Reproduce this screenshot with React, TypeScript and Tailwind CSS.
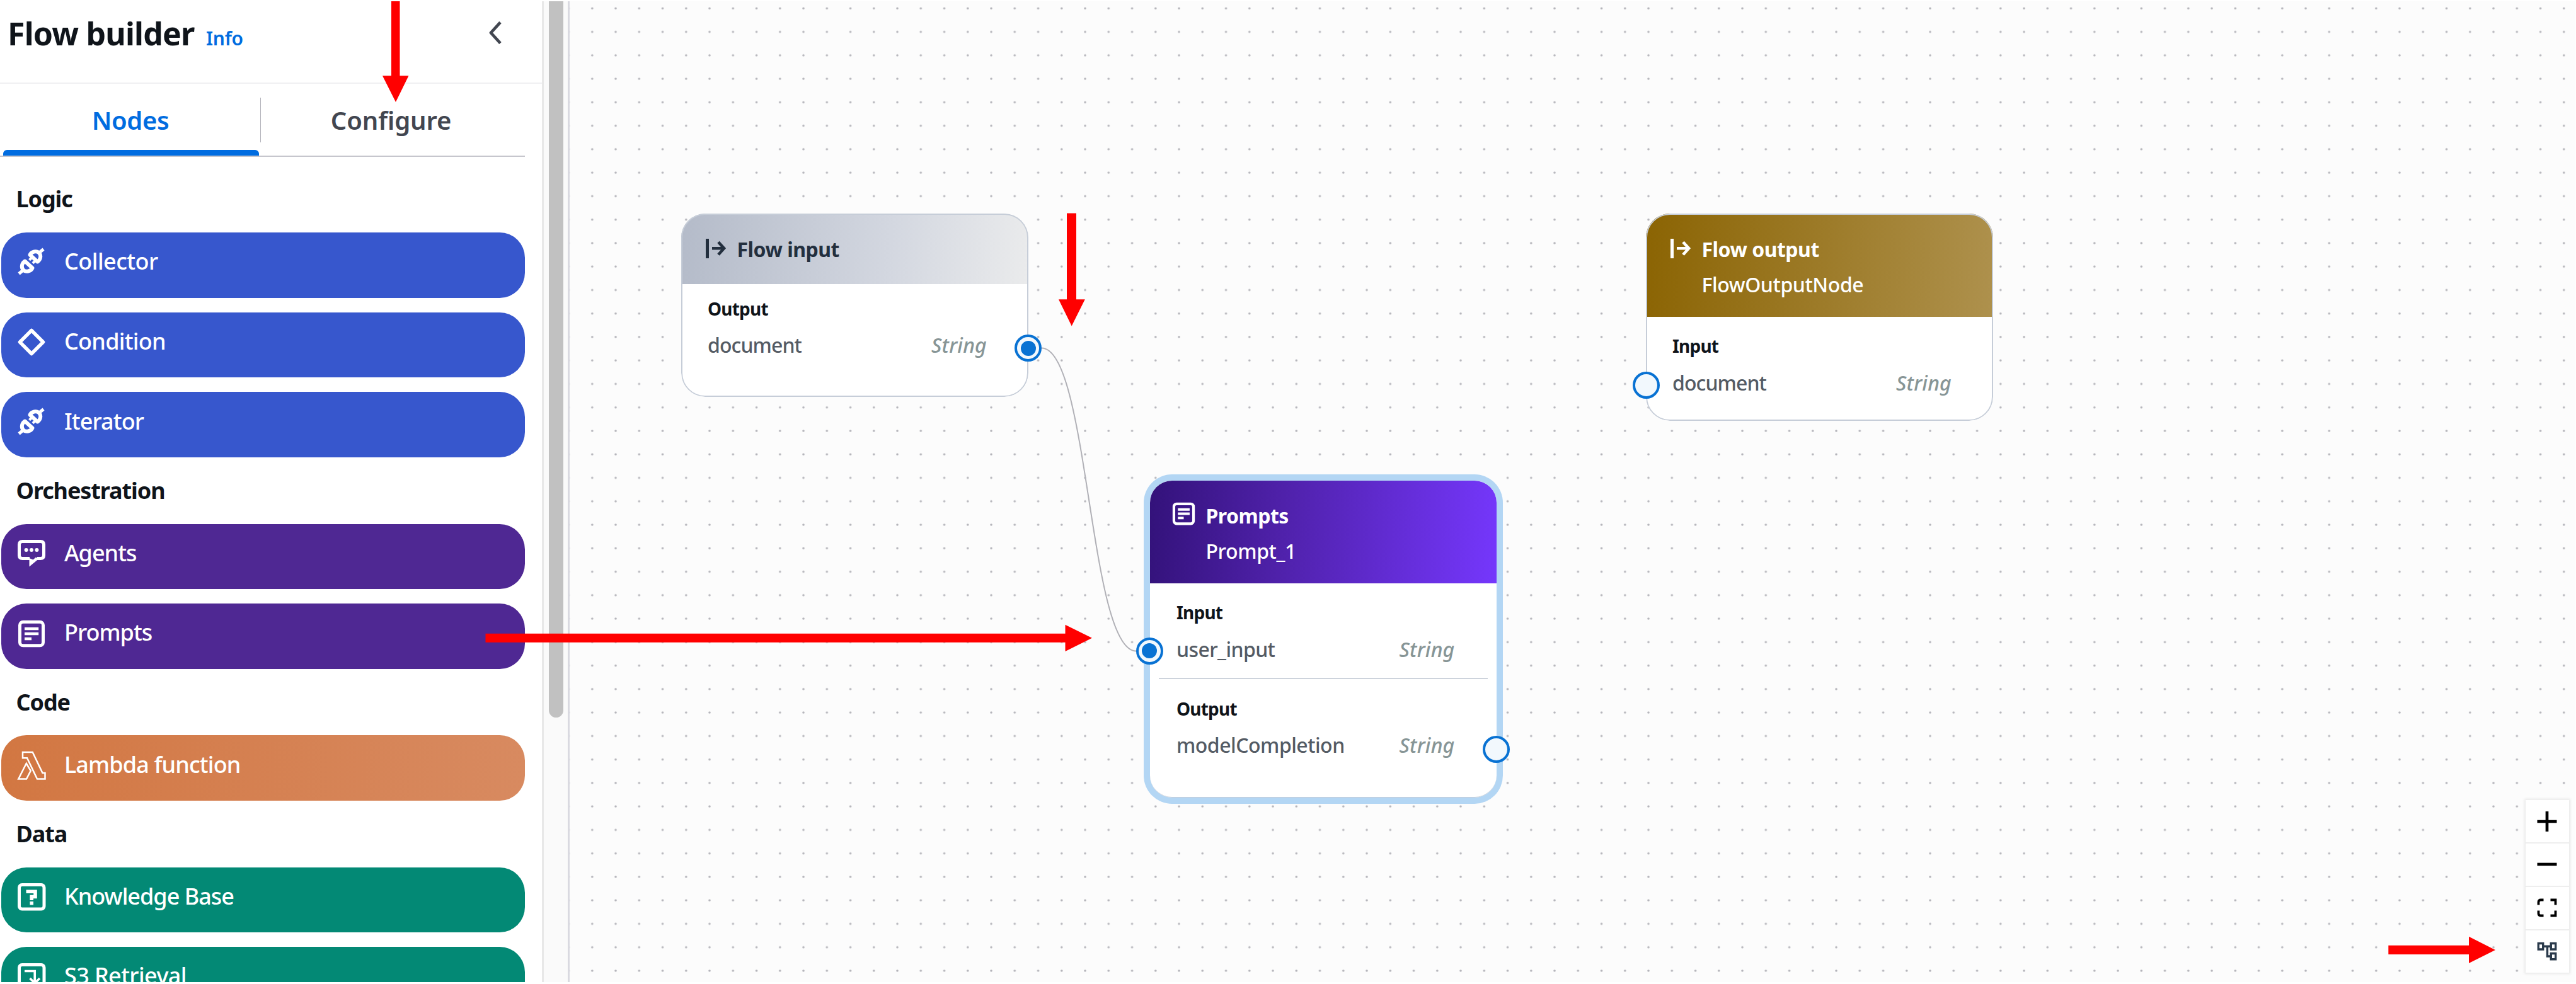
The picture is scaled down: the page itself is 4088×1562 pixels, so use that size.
import type { ReactNode } from "react";

/* ---------- Icons ---------- */

function Icon({ children, className = "size-[44px]" }: { children: ReactNode; className?: string }) {
  return (
    <svg viewBox="0 0 44 44" className={`${className} shrink-0 overflow-visible`} fill="none" stroke="currentColor" strokeWidth="5">
      {children}
    </svg>
  );
}

function PlugIcon() {
  const half = (
    <>
      <path d="M11.5 20.5 23.5 31.5C21 37 13 38.5 9 34.5 4.800 30 7 23.500 11.500 20.500Z" strokeWidth="6" strokeLinejoin="round" />
      <path d="M8 35.500 2 40.500" strokeWidth="5" />
    </>
  );
  return (
    <Icon>
      {half}
      <g transform="rotate(180 21.5 21)">{half}</g>
      <path d="M23 14.500 18.500 18.800M28.500 19.500 24 23.800" strokeWidth="4" />
    </Icon>
  );
}

function DiamondIcon() {
  return (
    <Icon>
      <path d="M22 3.500 40.500 22 22 40.500 3.500 22Z" strokeLinejoin="round" strokeWidth="5.500" />
    </Icon>
  );
}

function ChatIcon() {
  return (
    <Icon>
      <path d="M19 29.500H7.500Q2.500 29.500 2.500 24.500V7.500Q2.500 2.500 7.500 2.500H36.500Q41.500 2.500 41.500 7.500V24.500Q41.500 29.500 36.500 29.500H31" />
      <path d="M18.500 29V42.500L33 30.500 29 27.500 24.500 31.500Z" fill="currentColor" stroke="none" />
      <g fill="currentColor" stroke="none">
        <circle cx="13.600" cy="16" r="3" />
        <circle cx="22" cy="16" r="3" />
        <circle cx="30.400" cy="16" r="3" />
      </g>
    </Icon>
  );
}

function DocumentIcon({ className }: { className?: string }) {
  return (
    <Icon className={className}>
      <rect x="3.500" y="3.300" width="37" height="37.500" rx="5" />
      <path d="M11 14H33.200M11 22H33.200M11 30H22" strokeWidth="4.600" />
    </Icon>
  );
}

function LambdaIcon() {
  return (
    <Icon>
      <path
        d="M8 1H23.700L39.500 34H43.500V43.500H31L15 10.300H8ZM13.800 18.800 20.700 30.500 14 43.500H1.300Z"
        strokeWidth="2.500"
      />
    </Icon>
  );
}

function QuestionIcon() {
  return (
    <Icon>
      <rect x="2.500" y="2.500" width="39.500" height="38.500" rx="4.500" />
      <path d="M13.500 13.200H28V21.500H22.200V27" strokeWidth="5.600" />
      <path d="M22.200 29V34.500" strokeWidth="5.600" />
    </Icon>
  );
}

function RetrieveIcon() {
  return (
    <Icon>
      <rect x="2.500" y="2.500" width="39.500" height="38.500" rx="4.500" />
      <path d="M11 12.500H27.200V32M19.500 24 27.200 31.500 35 24" strokeWidth="3.600" />
    </Icon>
  );
}

function FlowIcon() {
  return (
    <svg viewBox="0 0 32 32" className="h-[32px] w-[32px] shrink-0" fill="none" stroke="currentColor" strokeWidth="5">
      <path d="M2.500 1V32" strokeWidth="5" />
      <path d="M10 16.200H29" strokeWidth="4.600" />
      <path d="M20 6.200 29 16.200 20 26.200" strokeWidth="4.600" />
    </svg>
  );
}

/* ---------- Sidebar ---------- */

type Item = { label: string; icon: ReactNode; text?: string };
type Section = { title: string; color: string; items: Item[] };

const sections: Section[] = [
  {
    title: "Logic",
    color: "bg-[#3757cd]",
    items: [
      { label: "Collector", icon: <PlugIcon />, text: "tracking-[-0.55px]" },
      { label: "Condition", icon: <DiamondIcon />, text: "tracking-[-0.75px]" },
      { label: "Iterator", icon: <PlugIcon />, text: "tracking-[-0.9px]" },
    ],
  },
  {
    title: "Orchestration",
    color: "bg-[#4f2893]",
    items: [
      { label: "Agents", icon: <ChatIcon />, text: "tracking-[-1px]" },
      { label: "Prompts", icon: <DocumentIcon />, text: "tracking-[-1px]" },
    ],
  },
  {
    title: "Code",
    color: "bg-linear-to-r from-[#d27742] to-[#d88a60]",
    items: [{ label: "Lambda function", icon: <LambdaIcon />, text: "tracking-[-0.85px]" }],
  },
  {
    title: "Data",
    color: "bg-[#038975]",
    items: [
      { label: "Knowledge Base", icon: <QuestionIcon />, text: "tracking-[-1px]" },
      { label: "S3 Retrieval", icon: <RetrieveIcon />, text: "tracking-[-0.6px]" },
    ],
  },
];

function Sidebar() {
  return (
    <aside className="flex h-full w-[860px] shrink-0 flex-col overflow-hidden bg-white">
      <header className="flex h-[131px] shrink-0 items-start justify-between border-b-2 border-[#f0f0f2] pt-[20.500px] pl-[12px]">
        <div className="flex items-baseline gap-[18.500px]">
          <h1 className="text-[50px] leading-[60px] font-bold tracking-[-0.8px] text-[#0f141a]">Flow builder</h1>
          <a className="text-[30px] leading-[60px] font-semibold tracking-[-0.3px] text-[#006ce0]">Info</a>
        </div>
        <svg viewBox="0 0 20 36" className="mt-[11px] mr-[64.500px] h-[36px] w-[20px]" fill="none" stroke="#424650" strokeWidth="4.800">
          <path d="M18 1.500 3 18 18 34.500" strokeLinejoin="round" />
        </svg>
      </header>

      <nav className="flex h-[116px] w-[833px] shrink-0 border-b-2 border-[#c6c6cd] text-[40px] leading-[54px] font-semibold">
        <div className="relative flex w-[414px] justify-center pt-[30.500px] tracking-[-0.4px] text-[#006ce0]">
          Nodes
          <span className="absolute bottom-0 left-[4.500px] h-[9.500px] w-[406.500px] rounded-t-[6px] bg-[#006ce0]" />
          <span className="absolute top-[22px] right-0 h-[71px] w-[1.500px] bg-[#b4b4bb]" />
        </div>
        <div className="flex w-[413px] justify-center pt-[30.500px] tracking-[-0.1px] text-[#424650]">Configure</div>
      </nav>

      <div className="flex flex-col pt-[14.500px] pr-[27px] pl-[1.500px]">
        {sections.map((s) => (
          <section key={s.title} className="flex shrink-0 flex-col">
            <h2 className="pt-[28.700px] pb-[28.800px] pl-[24px] text-[36px] leading-[48px] font-bold tracking-[-1.1px] text-[#0f141a]">
              {s.title}
            </h2>
            <div className="flex flex-col gap-[23px]">
              {s.items.map((it) => (
                <div key={it.label} className={`flex h-[103.700px] items-start gap-[30.500px] rounded-[40px] pl-[26px] text-white ${s.color}`}>
                  <div className="pt-[25.500px]">{it.icon}</div>
                  <span className={`pt-[22.200px] text-[36px] leading-[48px] font-medium ${it.text}`}>{it.label}</span>
                </div>
              ))}
            </div>
          </section>
        ))}
      </div>
    </aside>
  );
}

function Scrollbar() {
  return (
    <div className="flex h-full w-[44px] shrink-0 border-r-[3px] border-l-[3px] border-r-[#d9d9e0] border-l-[#e8e8e8] bg-[#fafafa] pl-[8px]">
      <div className="h-[1137px] w-[23px] rounded-b-full bg-[#c1c1c1]" />
    </div>
  );
}

/* ---------- Canvas ---------- */

function Handle({ filled, className }: { filled?: boolean; className: string }) {
  return (
    <span className={`absolute flex size-[43px] items-center justify-center rounded-full border-4 border-[#0972d3] bg-[#f2f8fd] ${className}`}>
      {filled && <span className="size-[24px] rounded-full bg-[#0972d3]" />}
    </span>
  );
}

function Port({ label, name, tight, spacing }: { label: string; name: string; tight?: boolean; spacing: string }) {
  return (
    <div className={`${tight ? "pt-[19px]" : "pt-[26.400px]"} pr-[66px] pl-[42.500px]`}>
      <div className="text-[28px] leading-[40px] font-bold tracking-[-0.8px] text-[#0f141a]">{label}</div>
      <div className="mt-[10.800px] -mb-px flex justify-between text-[32px] leading-[56px] font-medium">
        <span className={`text-[#545b64] ${spacing}`}>{name}</span>
        <span className="tracking-[0.2px] text-[#879596] italic">String</span>
      </div>
    </div>
  );
}

function NodeHeader({ icon, title, subtitle, className }: { icon: ReactNode; title: string; subtitle?: string; className: string }) {
  return (
    <div className={`flex flex-col pt-[28.800px] text-[32px] leading-[56px] ${className}`}>
      <div className="flex">
        <div className="flex w-[89px] shrink-0 pt-[10.500px] pl-[39px]">{icon}</div>
        <span className="font-bold tracking-[-0.5px]">{title}</span>
      </div>
      {subtitle && <div className="pl-[89px] font-medium tracking-[-0.4px]">{subtitle}</div>}
    </div>
  );
}

function Canvas() {
  return (
    <main className="relative h-full flex-1 overflow-hidden bg-[#fcfcfc]">
      <svg className="absolute inset-0 h-full w-full" fill="none">
        <pattern id="dots" x="17.200" y="-7.330" width="37.250" height="37.260" patternUnits="userSpaceOnUse">
          <circle cx="18.600" cy="18.630" r="1.800" fill="#b4b4ba" />
        </pattern>
        <rect width="100%" height="100%" fill="url(#dots)" />
        <path d="M749 550.500C824 550.500 824 1031.500 899 1031.500" stroke="#b1b1b7" strokeWidth="2" />
      </svg>

      <div className="absolute top-[337px] left-[176.500px] h-[291px] w-[551.500px]">
        <div className="relative h-full overflow-hidden rounded-[38px] bg-white">
          <NodeHeader
            icon={<FlowIcon />}
            title="Flow input"
            className="h-[111.500px] bg-[linear-gradient(94deg,#b4bbc9_0%,#d3d7e0_60%,#eaebec_100%)] text-[#232f3e]"
          />
          <Port label="Output" name="document" tight spacing="tracking-[-0.9px]" />
          <span className="absolute inset-0 rounded-[38px] border-2 border-[#c6cdd8]" />
        </div>
        <Handle filled className="top-[192px] -right-[21px]" />
      </div>

      <div className="absolute top-[337px] left-[1707.500px] h-[329px] w-[551.500px]">
        <div className="relative h-full overflow-hidden rounded-[38px] bg-white">
          <NodeHeader
            icon={<FlowIcon />}
            title="Flow output"
            subtitle="FlowOutputNode"
            className="h-[164px] bg-[linear-gradient(94deg,#8b6403,#ae914d)] text-white"
          />
          <Port label="Input" name="document" spacing="tracking-[-0.9px]" />
          <span className="absolute inset-0 rounded-[38px] border-2 border-[#c6cdd8]" />
        </div>
        <Handle className="top-[250.500px] -left-[21px]" />
      </div>

      <div className="absolute top-[760.500px] left-[920.500px] h-[503px] w-[550px] rounded-[35px] shadow-[0_0_0_10px_#b3d6f4]">
        <div className="relative h-full overflow-hidden rounded-[35px] border-b-[1.500px] border-[#c6cdd8] bg-white">
          <NodeHeader
            icon={<DocumentIcon className="-mt-[4.500px] -ml-[4px] size-[37px]" />}
            title="Prompts"
            subtitle="Prompt_1"
            className="h-[163px] bg-[linear-gradient(94deg,#33127a,#4f21aa_38%,#7537fc)] text-white"
          />
          <Port label="Input" name="user_input" spacing="tracking-[-0.6px]" />
          <div className="mx-[14px] mt-[18.500px] h-[2px] bg-[#cdd3dc]" />
          <Port label="Output" name="modelCompletion" spacing="tracking-[-0.5px]" />
        </div>
        <Handle filled className="top-[249px] -left-[22px]" />
        <Handle className="top-[405px] -right-[21.500px]" />
      </div>

      <div className="absolute top-[1268px] left-[3104px] flex w-[68.500px] flex-col divide-y-2 divide-[#eeeeee] bg-white shadow-[0_0_4px_2px_rgba(0,0,0,0.08)]">
        <button className="flex h-[69px] items-center justify-center">
          <svg viewBox="0 0 32 32" className="size-[32px]" stroke="#000" strokeWidth="4.700">
            <path d="M.5 16H31.500M16 0V32" />
          </svg>
        </button>
        <button className="flex h-[68.500px] items-center justify-center">
          <svg viewBox="0 0 32 32" className="size-[32px]" stroke="#000" strokeWidth="4.700">
            <path d="M.5 16H31.500" />
          </svg>
        </button>
        <button className="flex h-[69px] items-center justify-center">
          <svg viewBox="0 0 32 32" className="size-[32px]" fill="none" stroke="#000" strokeWidth="3.800">
            <path d="M2.500 11.500V7Q2.500 3.500 6 3.500H10.500M21.500 3.500H29.500V11.500M2.500 20.500V25Q2.500 28.500 6 28.500H10.500M29.500 20.500V28.500H21.500" />
          </svg>
        </button>
        <button className="flex h-[67.500px] items-center justify-center">
          <svg viewBox="0 0 32 32" className="size-[32px]" fill="none" stroke="#2a3a4b" strokeWidth="3.400">
            <path d="M2.300 3.500H9.700V13H2.300ZM22.300 3.500H29.700V13H22.300ZM22.300 19.500H29.700V28.700H22.300ZM11 8.300H21M16.500 8.300V24H21" />
          </svg>
        </button>
      </div>
    </main>
  );
}

/* Red arrows that point out the steps, drawn above the whole page. */
function Arrows() {
  return (
    <svg className="pointer-events-none absolute inset-0 h-full w-full" fill="#ff0000">
      <path d="M621 2H634.500V120.300H648.500L628 162 607 120.300H621Z" />
      <path d="M1693 338.500H1708V475.300H1721.800L1700.700 517.500 1680 475.300H1693Z" />
      <path d="M770.500 1005.700H1690.500V991.700L1733 1012.800 1690.500 1034V1019.700H770.500Z" />
      <path d="M3790.300 1500.700H3918V1486.700L3960 1508 3918 1529V1515H3790.300Z" />
    </svg>
  );
}

export default function App() {
  return (
    <div className="relative flex h-[1562px] w-[4088px] overflow-hidden bg-white pt-[2px] pr-px pb-[3px] font-['Noto_Sans',sans-serif]">
      <Sidebar />
      <Scrollbar />
      <Canvas />
      <Arrows />
    </div>
  );
}
